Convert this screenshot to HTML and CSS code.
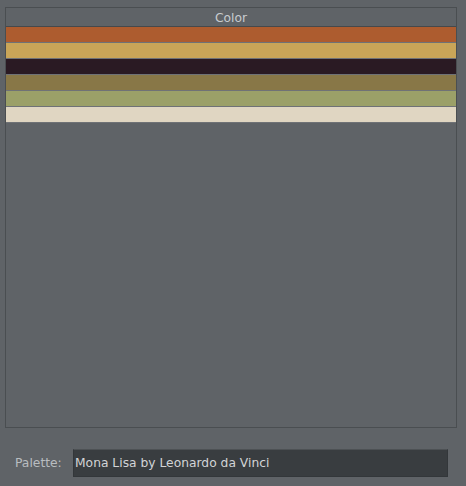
FILE: index.html
```html
<!DOCTYPE html>
<html>
<head>
<meta charset="utf-8">
<link rel="stylesheet" href="styles.css">
</head>
<body>
<div class="panel">
  <div class="header">Color</div>
  <div class="rows">
    <div class="swatch c1"></div>
    <div class="swatch c2"></div>
    <div class="swatch c3"></div>
    <div class="swatch c4"></div>
    <div class="swatch c5"></div>
    <div class="swatch c6"></div>
  </div>
</div>
<div class="footer">
  <span class="label">Palette:</span>
  <div class="input">Mona Lisa by Leonardo da Vinci</div>
</div>
</body>
</html>
```
FILE: styles.css
```css
html, body {
  margin: 0;
  padding: 0;
  background: #5f6367;
  font-family: "DejaVu Sans", sans-serif;
  font-size: 12.3px;
}
body {
  padding: 7px 0 0 5px;
}
.panel {
  box-sizing: border-box;
  width: 452px;
  height: 421px;
  border: 1px solid #4a4e51;
  display: flex;
  flex-direction: column;
}
.header {
  box-sizing: border-box;
  height: 19px;
  line-height: 18px;
  padding-top: 1px;
  text-align: center;
  color: #c8cccf;
  border-bottom: 1px solid #46494c;
}
.rows {
  display: flex;
  flex-direction: column;
}
.swatch {
  height: 15px;
  border-bottom: 1px solid #6f7276;
}
.c1 { background: #ad5c2f; }
.c2 { background: #c9a558; }
.c3 { background: #2a1a23; }
.c4 { background: #887747; }
.c5 { background: #9ba068; }
.c6 { background: #e0d6c2; }
.footer {
  display: flex;
  align-items: center;
  margin-top: 21px;
  padding-left: 10px;
}
.label {
  color: #b9bdc0;
  width: 58px;
}
.input {
  box-sizing: border-box;
  width: 375px;
  height: 28px;
  line-height: 26px;
  background: #393d40;
  border: 1px solid #33373a;
  border-top-color: #4d5154;
  color: #d2d4d6;
  padding-left: 1px;
}
```
